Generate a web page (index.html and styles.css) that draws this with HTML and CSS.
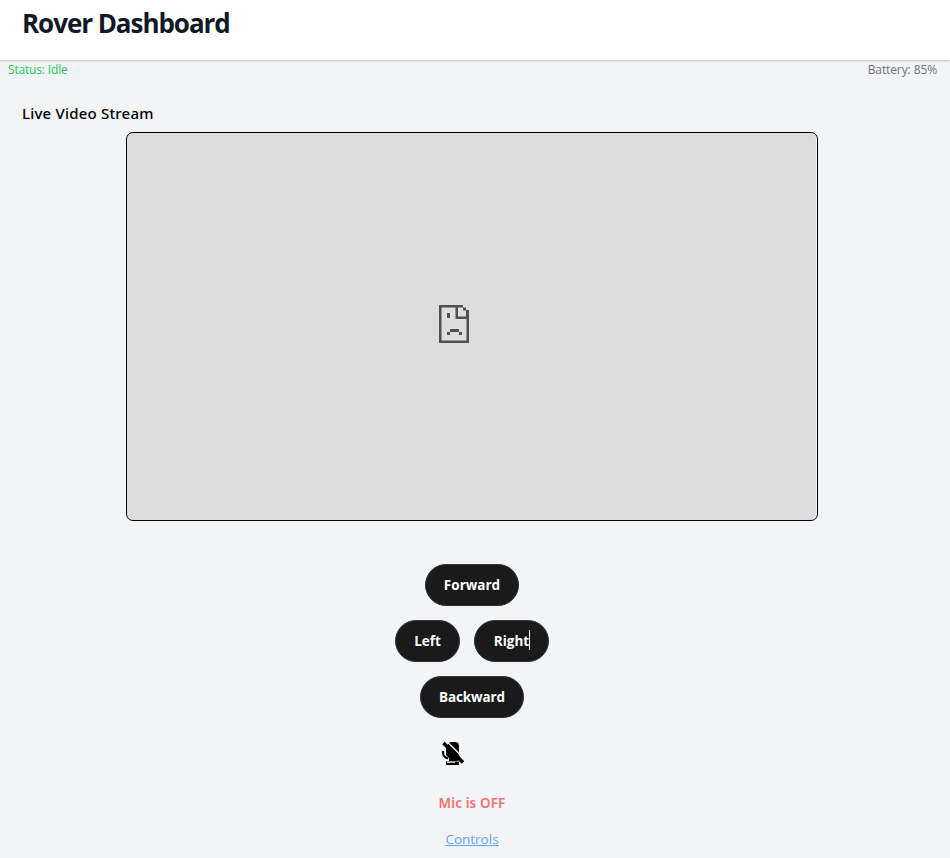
FILE: index.html
```html
<!DOCTYPE html>
<html lang="en">
<head>
<meta charset="utf-8">
<title>Rover Dashboard</title>
<link rel="stylesheet" href="styles.css">
</head>
<body>
<header class="header"><h1 class="title"><span>Rover Dashboard</span></h1></header>
<div class="status-bar"><span class="status">Status: Idle</span><span class="battery">Battery: 85%</span></div>
<main class="main">
  <h2 class="section-title"><span>Live Video Stream</span></h2>
  <div class="video">
    <svg class="broken" width="30" height="38" viewBox="0 0 30 38">
      <path fill="#505050" d="M0 0H24V2.500H19V11.500H30V38H0ZM2.500 2.500V35.500H27.500V14H16.500V2.500Z" fill-rule="evenodd"/>
      <path fill="#505050" d="M24 2.500h3v3h-3zM27 5h3v9h-3zM8 8h3v5H8zM11 24h9v3h-9zM8 27h3v3H8zM20 27h3v3h-3z"/>
    </svg>
  </div>
  <div class="controls">
    <button class="btn forward"><span>Forward</span></button>
    <div class="row">
      <button class="btn left"><span>Left</span></button>
      <button class="btn right"><span>Right</span><i class="caret"></i></button>
    </div>
    <button class="btn backward"><span>Backward</span></button>
  </div>
  <svg class="mic" width="24" height="26" viewBox="0 0 24 26">
    <path d="M7 3Q8 1 10 1H14Q18 1 18 5V14L20 18L16 20H8V17L5 14V7Z"/>
    <path d="M2 10V12Q2 16 7 17.500" fill="none" stroke="#000" stroke-width="2"/>
    <path d="M5 20.500H18V24H5Z"/>
    <path d="M6 21.300H14" stroke="#f3f4f6" stroke-width="1"/>
    <path d="M7 1.500L20.500 15" stroke="#f3f4f6" stroke-width="1.400"/>
    <path d="M2.500 2L22 21.500" stroke="#000" stroke-width="3.600"/>
  </svg>
  <p class="mic-state"><span>Mic is OFF</span></p>
  <a class="link" href="#">Controls</a>
</main>
</body>
</html>
```

FILE: styles.css
```css
* { box-sizing: border-box; }
body {
  margin: 0;
  height: 858px;
  overflow: hidden;
  background: #f3f4f6;
  color: #000;
  font-family: "Open Sans", "Noto Sans", sans-serif;
}
h1, h2, p { margin: 0; }
.header {
  height: 60px;
  padding: 5px 22px;
  background: #fff;
  box-shadow: 0 1px 2px rgba(0, 0, 0, .2);
}
.title {
  color: #111827;
  font-size: 26px;
  line-height: 36px;
  font-weight: 700;
  letter-spacing: -1.050px;
}
.status-bar {
  display: flex;
  justify-content: space-between;
  height: 20px;
  padding: 0 13px 0 8px;
  font-size: 12px;
  line-height: 20px;
  letter-spacing: -.1px;
}
.status { color: #22c55e; letter-spacing: -.17px; }
.battery { color: #6b7280; }
.main {
  display: flex;
  flex-direction: column;
  align-items: center;
  padding: 21px 28px 0 22px;
}
.section-title {
  align-self: flex-start;
  font-family: "Noto Sans", "Open Sans", sans-serif;
  font-size: 15px;
  line-height: 24px;
  font-weight: 500;
  letter-spacing: .2px;
}
.video {
  width: 692px;
  height: 389px;
  margin-top: 7px;
  padding: 172px 0 0 312px;
  border: 1px solid #000;
  border-radius: 7px;
  background: #ddd;
  box-shadow: inset -1px 0 #f3f4f6;
}
.broken { display: block; }
.controls {
  display: flex;
  flex-direction: column;
  align-items: center;
  gap: 14px;
  margin-top: 43px;
}
.row { display: flex; gap: 14px; }
.btn {
  position: relative;
  height: 42px;
  padding: 0;
  border: 1px solid #303236;
  border-radius: 21px;
  background: #1a1a1a;
  color: #fff;
  font: 700 13.500px/20px "Open Sans", "Noto Sans", sans-serif;
}
.forward { width: 94px; }
.left { width: 65px; }
.right { width: 75px; }
.backward { width: 104px; letter-spacing: -.1px; }
.caret {
  position: absolute;
  left: 54px;
  top: 9px;
  width: 1px;
  height: 20px;
  background: #fff;
}
.mic { margin: 23px 38px 0 0; }
.mic-state {
  margin-top: 26px;
  color: #f87171;
  font-family: "Noto Sans", "Open Sans", sans-serif;
  font-size: 13.500px;
  line-height: 20px;
  font-weight: 600;
  letter-spacing: .1px;
}
.link {
  margin-top: 16px;
  color: #60a5fa;
  font-size: 13.500px;
  line-height: 20px;
}
```
